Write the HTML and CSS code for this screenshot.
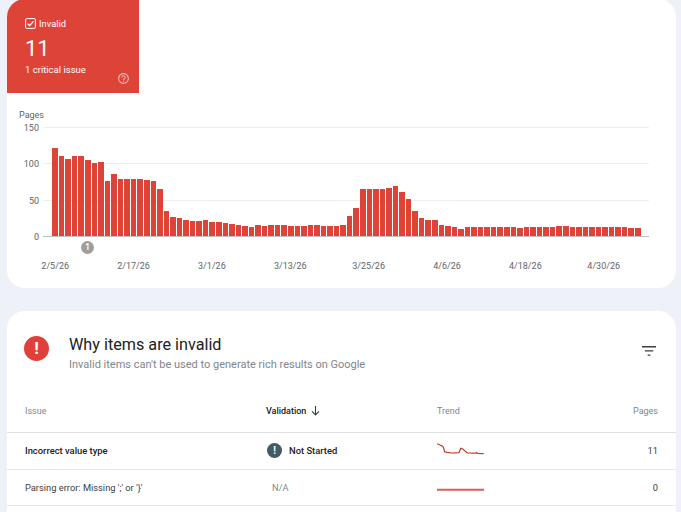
FILE: index.html
```html
<!DOCTYPE html>
<html lang="en">
<head>
    <meta charset="UTF-8">
    <meta name="viewport" content="width=device-width, initial-scale=1.0">
    <title>Why items are invalid</title>
    <link rel="stylesheet" href="styles.css">
</head>
<body>
    <div class="card summary">
        <div class="tile">
            <div class="tile-head">
                <svg class="check" width="11" height="11" viewBox="0 0 11 11"><rect x="0.6" y="0.6" width="9.8" height="9.8" rx="1.2" fill="none" stroke="#fff" stroke-width="1"/><path d="M2.6 5.6 4.6 7.6 8.5 3.4" fill="none" stroke="#fff" stroke-width="1.3"/></svg>
                <span>Invalid</span>
            </div>
            <div class="tile-num">11</div>
            <div class="tile-foot">
                <span>1 critical issue</span>
                <svg class="help" width="13" height="13" viewBox="0 0 24 24"><path fill="#fff" d="M11 18h2v-2h-2v2zm1-16C6.48 2 2 6.48 2 12s4.48 10 10 10 10-4.48 10-10S17.52 2 12 2zm0 18c-4.41 0-8-3.59-8-8s3.59-8 8-8 8 3.59 8 8-3.59 8-8 8zm0-14c-2.21 0-4 1.79-4 4h2c0-1.1.9-2 2-2s2 .9 2 2c0 2-3 1.75-3 5h2c0-2.25 3-2.5 3-5 0-2.21-1.79-4-4-4z"/></svg>
            </div>
        </div>

        <div class="chart">
            <div class="chart-title">Pages</div>
            <div class="plot">
                <div class="grid-row"><span>150</span><div class="line"></div></div>
                <div class="grid-row"><span>100</span><div class="line"></div></div>
                <div class="grid-row"><span>50</span><div class="line"></div></div>
                <div class="grid-row base"><span>0</span><div class="line"></div></div>
                <div class="bars">
                    <i style="height:87.7px"></i><i style="height:79.7px"></i><i style="height:77.3px"></i><i style="height:80.3px"></i><i style="height:80.3px"></i><i style="height:75.7px"></i><i style="height:72.7px"></i><i style="height:73.7px"></i><i style="height:54.7px"></i><i style="height:62px"></i>
                    <i style="height:56.7px"></i><i style="height:56.7px"></i><i style="height:56.7px"></i><i style="height:56.7px"></i><i style="height:56px"></i><i style="height:54.7px"></i><i style="height:47px"></i><i style="height:25.3px"></i><i style="height:19.3px"></i><i style="height:18px"></i>
                    <i style="height:16px"></i><i style="height:15px"></i><i style="height:15px"></i><i style="height:16px"></i><i style="height:13.7px"></i><i style="height:13.7px"></i><i style="height:12.7px"></i><i style="height:12px"></i><i style="height:11.3px"></i><i style="height:10px"></i>
                    <i style="height:9px"></i><i style="height:11px"></i><i style="height:10px"></i><i style="height:11px"></i><i style="height:11px"></i><i style="height:11px"></i><i style="height:10px"></i><i style="height:10px"></i><i style="height:10px"></i><i style="height:11px"></i>
                    <i style="height:11px"></i><i style="height:10px"></i><i style="height:10px"></i><i style="height:10px"></i><i style="height:11px"></i><i style="height:20.3px"></i><i style="height:27.7px"></i><i style="height:46.7px"></i><i style="height:46.7px"></i><i style="height:46.7px"></i>
                    <i style="height:46.7px"></i><i style="height:48px"></i><i style="height:50.3px"></i><i style="height:44.3px"></i><i style="height:37px"></i><i style="height:24.7px"></i><i style="height:18px"></i><i style="height:16px"></i><i style="height:16px"></i><i style="height:11.3px"></i>
                    <i style="height:10px"></i><i style="height:8.7px"></i><i style="height:7px"></i><i style="height:9.3px"></i><i style="height:9.3px"></i><i style="height:9.3px"></i><i style="height:9.3px"></i><i style="height:9.3px"></i><i style="height:8.7px"></i><i style="height:8.7px"></i>
                    <i style="height:8.7px"></i><i style="height:8px"></i><i style="height:8.7px"></i><i style="height:9.3px"></i><i style="height:9.3px"></i><i style="height:9.3px"></i><i style="height:9.3px"></i><i style="height:10.3px"></i><i style="height:10.3px"></i><i style="height:9.3px"></i>
                    <i style="height:9.3px"></i><i style="height:8.7px"></i><i style="height:8.7px"></i><i style="height:8.7px"></i><i style="height:8.7px"></i><i style="height:8.7px"></i><i style="height:9.3px"></i><i style="height:9.3px"></i><i style="height:8px"></i><i style="height:8px"></i>
                </div>
            </div>
            <div class="markers"><span class="marker">1</span></div>
            <div class="dates">
                <span>2/5/26</span><span>2/17/26</span><span>3/1/26</span><span>3/13/26</span><span>3/25/26</span><span>4/6/26</span><span>4/18/26</span><span>4/30/26</span>
            </div>
        </div>
    </div>

    <div class="card issues">
        <div class="issues-head">
            <div class="alert">!</div>
            <div class="issues-text">
                <h2>Why items are invalid</h2>
                <p>Invalid items can't be used to generate rich results on Google</p>
            </div>
            <svg class="filter" width="14" height="10" viewBox="0 0 14 10"><path d="M0 0h14v1.4H0zM2.8 4.2h8.4v1.4H2.8zM5.6 8.4h2.8v1.4H5.6z" fill="#3c4043"/></svg>
        </div>

        <div class="row head-row">
            <div class="muted">Issue</div>
            <div class="sorted">Validation
                <svg width="9" height="10" viewBox="0 0 9 10"><path d="M4.5 0v8.6M1 5.4l3.5 3.6L8 5.4" fill="none" stroke="#3c4043" stroke-width="1.1"/></svg>
            </div>
            <div class="muted">Trend</div>
            <div class="muted num">Pages</div>
        </div>
        <div class="row tall">
            <div class="bold">Incorrect value type</div>
            <div class="status"><span class="status-icon">!</span><span class="bold">Not Started</span></div>
            <svg class="spark" width="48" height="16" viewBox="0 0 48 16"><path d="M0 2.7 3 4 4.5 4.6 6.3 6 7.7 10.7 10 11.4 14.7 12 22 11.7 23.7 7.3 25.7 8 30.3 12 39 12.2 39.7 11.6 40.4 12.3 46.7 12.7" fill="none" stroke="#c9372c" stroke-width="1.2"/></svg>
            <div class="num">11</div>
        </div>
        <div class="row">
            <div>Parsing error: Missing ';' or '}'</div>
            <div class="na">N/A</div>
            <svg class="spark" width="48" height="16" viewBox="0 0 48 16"><path d="M0 12.7H47" fill="none" stroke="#d2625a" stroke-width="2"/></svg>
            <div class="num">0</div>
        </div>
    </div>
</body>
</html>
```

FILE: styles.css
```css
html, body {
    height: 512px;
    margin: 0;
    overflow: hidden;
}
body {
    font-family: Roboto, "Liberation Sans", sans-serif;
    font-size: 9px;
    color: #3c4043;
    background-color: #eef2f8;
    padding: 0 5px 0 7px;
    box-sizing: border-box;
}
.card {
    background-color: #fff;
    border-radius: 18px;
    overflow: hidden;
}
.summary {
    margin-top: -1px;
    height: 289px;
}
.issues {
    margin-top: 23px;
    height: 201px;
    border-radius: 18px 18px 0 0;
}

/* red tile */
.tile {
    width: 132px;
    height: 94px;
    background-color: #de4338;
    color: #fff;
    box-sizing: border-box;
    padding: 18px 9px 0 18px;
}
.tile-head {
    display: flex;
    align-items: center;
    gap: 3px;
    height: 12px;
    font-size: 9.4px;
}
.tile-num {
    font-size: 22px;
    line-height: 26px;
    margin-top: 7px;
}
.tile-foot {
    display: flex;
    justify-content: space-between;
    line-height: 12px;
    margin-top: 2px;
    font-size: 9.5px;
}
.help {
    margin-top: 8px;
    opacity: 0.6;
}

/* chart */
.chart {
    padding: 16px 27px 0 12px;
}
.chart-title {
    height: 12px;
    line-height: 12px;
    color: #5f6368;
}
.plot {
    position: relative;
    margin-top: 6px;
}
.grid-row {
    display: grid;
    grid-template-columns: 20px 1fr;
    column-gap: 4px;
    height: 36.3px;
}
.grid-row.base {
    height: 1px;
}
.grid-row span {
    line-height: 0;
    padding-top: 1px;
    text-align: right;
    color: #5f6368;
}
.line {
    height: 1px;
    background-color: #eceef1;
}
.base .line {
    background-color: #bdc1c6;
}
.bars {
    position: absolute;
    left: 33.3px;
    bottom: 1px;
    width: 588px;
    display: flex;
    align-items: flex-end;
    gap: 1px;
}
.bars i {
    flex: 1;
    background-color: #de4338;
}
.markers {
    margin: 4px 0 0 62px;
    height: 13px;
}
.marker {
    display: block;
    width: 13px;
    height: 13px;
    line-height: 13px;
    border-radius: 50%;
    background-color: #9e9e9e;
    color: #fff;
    text-align: center;
    font-size: 9px;
    font-weight: 500;
}
.dates {
    display: flex;
    margin: 6px 0 0 -3px;
    line-height: 12px;
    color: #5f6368;
}
.dates span {
    width: 78.37px;
    text-align: center;
}

/* issues table */
.issues-head {
    display: flex;
    align-items: flex-start;
    padding: 25px 20px 0 17px;
    height: 57px;
}
.alert {
    width: 25px;
    height: 25px;
    line-height: 25px;
    border-radius: 50%;
    background-color: #e0403a;
    color: #fff;
    text-align: center;
    font-size: 17px;
    font-weight: 700;
}
.issues-text {
    flex: 1;
    margin-left: 20px;
}
h2 {
    margin: 0;
    font-size: 16.2px;
    line-height: 18px;
    font-weight: 400;
    color: #202124;
}
.issues-text p {
    margin: 4px 0 0;
    font-size: 11px;
    line-height: 14px;
    color: #80868b;
}
.filter {
    margin-top: 10px;
}
.row {
    display: grid;
    grid-template-columns: 241px 171px 1fr 60px;
    align-items: center;
    height: 34px;
    padding: 0 18px 1px;
    border-bottom: 1px solid #e6e7e9;
    font-size: 9.3px;
}
.head-row {
    height: 36px;
    padding-bottom: 3px;
    border-bottom-color: #dfe1e5;
    font-size: 9px;
}
.row.tall {
    height: 35px;
    padding-bottom: 1px;
}
.muted {
    color: #80868b;
}
.num {
    text-align: right;
}
.bold, .sorted {
    font-weight: 500;
    color: #202124;
}
.bold {
    font-size: 9.4px;
}
.sorted {
    display: flex;
    align-items: center;
    gap: 5px;
}
.status {
    display: flex;
    align-items: center;
    gap: 7px;
    margin-left: 1px;
}
.status-icon {
    width: 15px;
    height: 15px;
    line-height: 15px;
    border-radius: 50%;
    background-color: #455a64;
    color: #fff;
    text-align: center;
    font-size: 10px;
    font-weight: 700;
}
.na {
    margin-left: 6px;
    color: #80868b;
}
.spark {
    margin-bottom: 4px;
}
```
